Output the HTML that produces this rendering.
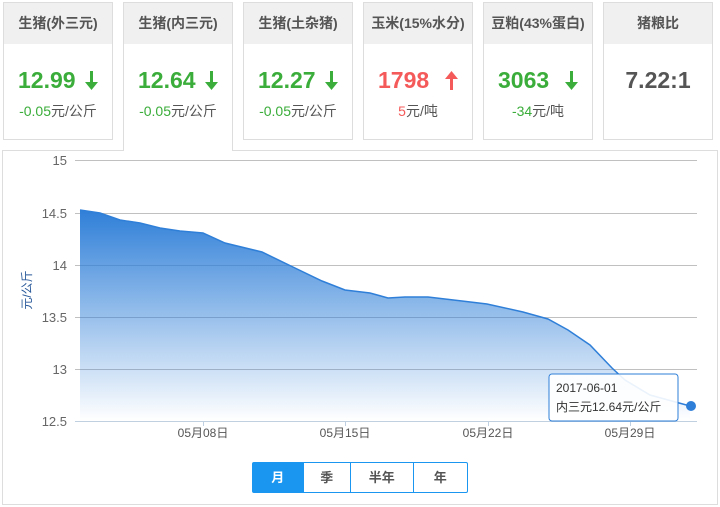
<!DOCTYPE html>
<html><head><meta charset="utf-8"><style>
*{margin:0;padding:0;box-sizing:border-box}
body{width:720px;height:507px;background:#fff;position:relative;overflow:hidden;font-family:"Liberation Sans","Noto Sans CJK SC",sans-serif}
.card{position:absolute;top:2px;width:110px;height:138px;border:1px solid #ddd;background:#fff}
.card .h{height:41px;background:#f0f0f0;text-align:center;line-height:41px;font-size:14px;font-weight:bold;color:#555}
.card .v{text-align:center;font-size:23px;font-weight:bold;margin-top:22px;height:28px;line-height:28px}
.card .v svg{vertical-align:-2px;margin-left:3px}
.card .d{text-align:center;font-size:14px;color:#555;margin-top:7px}
.g{color:#3aad3a}.r{color:#f55a5a}
.act{height:149px;border-bottom:none;z-index:2}
.panel{position:absolute;left:2px;top:150px;width:716px;height:355px;border:1px solid #ddd;background:#fff}
.btns{position:absolute;left:252px;top:462px;height:31px;width:216px;border:1px solid #1a96f0;border-radius:2px;display:flex;font-size:13px;font-weight:bold;color:#555}
.btns div{text-align:center;line-height:29px;border-left:1px solid #1a96f0}
.btns div:first-child{border-left:none;background:#1a96f0;color:#fff}
</style></head><body>
<div class="card" style="left:3px"><div class="h">生猪(外三元)</div><div class="v g">12.99 <svg width="13" height="19"><path d="M5,0h3v11h5l-6.5,8l-6.5,-8h5z" fill="#3aad3a"/></svg></div><div class="d"><span class="g">-0.05</span>元/公斤</div></div>
<div class="card act" style="left:123px"><div class="h">生猪(内三元)</div><div class="v g">12.64 <svg width="13" height="19"><path d="M5,0h3v11h5l-6.5,8l-6.5,-8h5z" fill="#3aad3a"/></svg></div><div class="d"><span class="g">-0.05</span>元/公斤</div></div>
<div class="card" style="left:243px"><div class="h">生猪(土杂猪)</div><div class="v g">12.27 <svg width="13" height="19"><path d="M5,0h3v11h5l-6.5,8l-6.5,-8h5z" fill="#3aad3a"/></svg></div><div class="d"><span class="g">-0.05</span>元/公斤</div></div>
<div class="card" style="left:363px"><div class="h">玉米(15%水分)</div><div class="v r">1798 &nbsp;<svg width="13" height="19"><path d="M5,19h3v-11h5l-6.5,-8l-6.5,8h5z" fill="#f55a5a"/></svg></div><div class="d"><span class="r">5</span>元/吨</div></div>
<div class="card" style="left:483px"><div class="h">豆粕(43%蛋白)</div><div class="v g">3063 &nbsp;<svg width="13" height="19"><path d="M5,0h3v11h5l-6.5,8l-6.5,-8h5z" fill="#3aad3a"/></svg></div><div class="d"><span class="g">-34</span>元/吨</div></div>
<div class="card" style="left:603px"><div class="h">猪粮比</div><div class="v" style="color:#555">7.22:1</div></div>
<div class="panel"></div>
<svg style="position:absolute;left:0;top:0" width="720" height="507">
<defs><linearGradient id="gr" x1="0" y1="0" x2="0" y2="1"><stop offset="0" stop-color="#2f7fd8"/><stop offset="1" stop-color="#2f7fd8" stop-opacity="0"/></linearGradient></defs>
<g stroke="#c0c0c0" stroke-width="1">
<line x1="75" y1="160.5" x2="697" y2="160.5"/><line x1="75" y1="213.5" x2="697" y2="213.5"/><line x1="75" y1="265.5" x2="697" y2="265.5"/><line x1="75" y1="317.5" x2="697" y2="317.5"/><line x1="75" y1="369.5" x2="697" y2="369.5"/>
</g>
<path d="M80,210 L100,213 L120,220 L140,223 L160,228 L180,231 L203,233 L225,243 L262,252 L295,268 L322,281 L345,290 L370,293 L388,298 L405,297 L428,297 L462,301 L487,304 L523,312 L548,319 L568,330 L590,345 L612,368 L625,380 L650,395 L690,406 L690,421 L80,421Z" fill="url(#gr)"/>
<path d="M80,210 L100,213 L120,220 L140,223 L160,228 L180,231 L203,233 L225,243 L262,252 L295,268 L322,281 L345,290 L370,293 L388,298 L405,297 L428,297 L462,301 L487,304 L523,312 L548,319 L568,330 L590,345 L612,368 L625,380 L650,395 L690,406" fill="none" stroke="#2f7fd8" stroke-width="1.5"/>
<line x1="75" y1="421.5" x2="697" y2="421.5" stroke="#c0d0e0"/>
<g stroke="#c0d0e0"><line x1="203.5" y1="421" x2="203.5" y2="426"/><line x1="345.5" y1="421" x2="345.5" y2="426"/><line x1="488.5" y1="421" x2="488.5" y2="426"/><line x1="630.5" y1="421" x2="630.5" y2="426"/></g>
<circle cx="691" cy="406" r="5" fill="#2f7fd8"/>
<g font-size="13" fill="#666" text-anchor="end" font-family="Liberation Sans,sans-serif">
<text x="67" y="165">15</text><text x="67" y="218">14.5</text><text x="67" y="270">14</text><text x="67" y="322">13.5</text><text x="67" y="374">13</text><text x="67" y="426">12.5</text></g>
<g font-size="12" fill="#555" text-anchor="middle" font-family="Liberation Sans,Noto Sans CJK SC,sans-serif">
<text x="203" y="437">05月08日</text><text x="345" y="437">05月15日</text><text x="488" y="437">05月22日</text><text x="630" y="437">05月29日</text></g>
<text transform="translate(31,290) rotate(-90)" font-size="12" fill="#2a5a9a" text-anchor="middle" font-family="Liberation Sans,Noto Sans CJK SC,sans-serif">元/公斤</text>
<rect x="549" y="374" width="129" height="47" rx="3" fill="#fff" fill-opacity="0.9" stroke="#2f7fd8"/>
<g font-size="12" fill="#333" font-family="Liberation Sans,Noto Sans CJK SC,sans-serif"><text x="556" y="392">2017-06-01</text><text x="556" y="411">内三元12.64元/公斤</text></g>
</svg>
<div class="btns"><div style="width:50px">月</div><div style="width:48px">季</div><div style="width:63px">半年</div><div style="width:55px">年</div></div>
</body></html>
